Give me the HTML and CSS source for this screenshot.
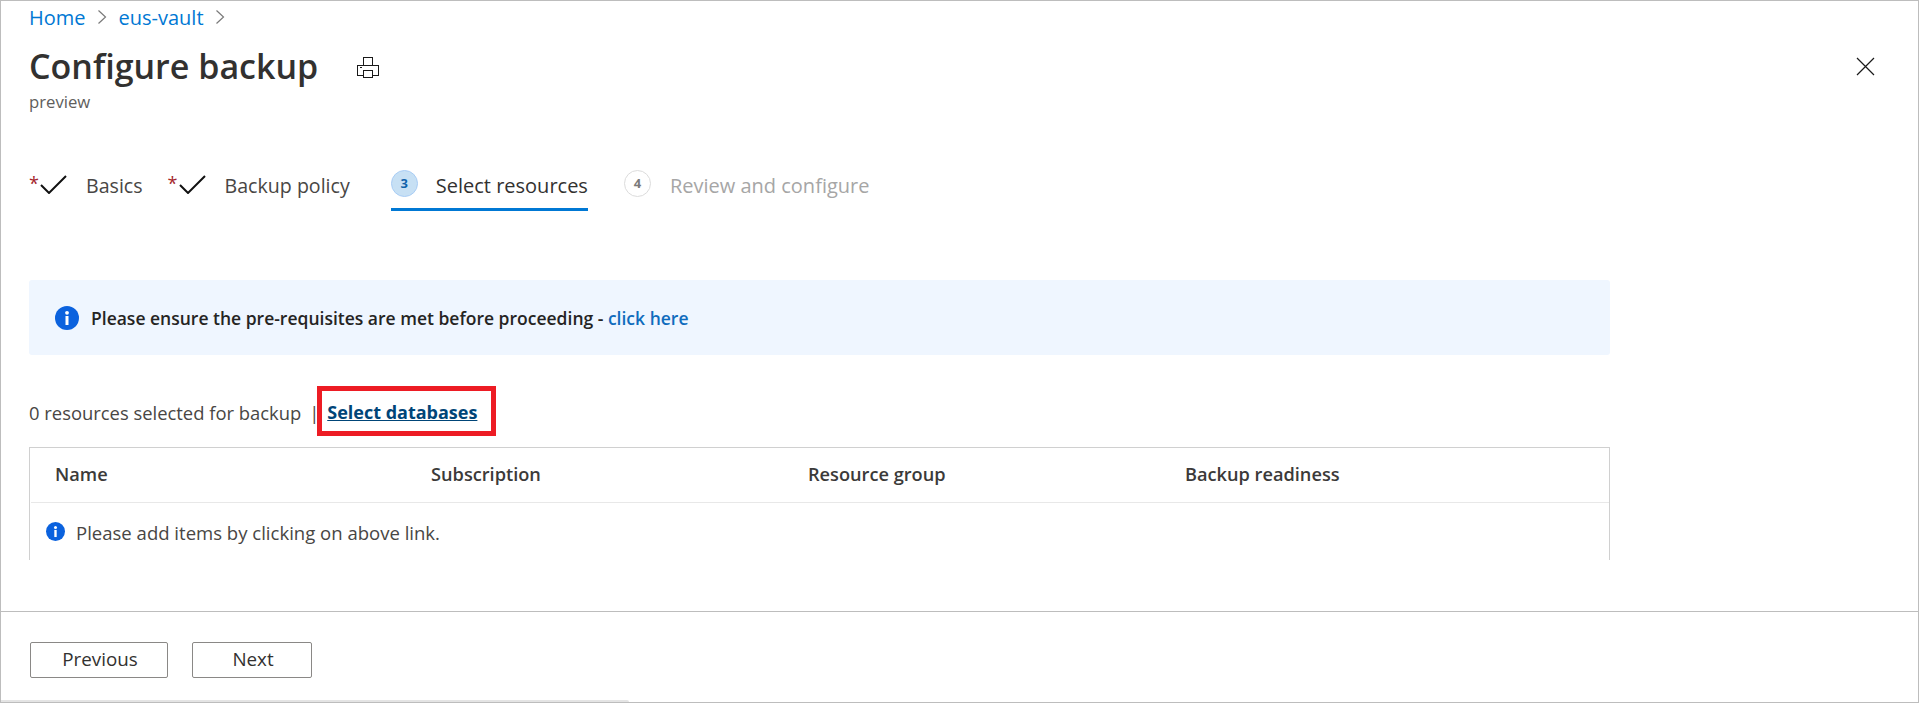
FILE: index.html
```html
<!DOCTYPE html>
<html lang="en">
<head>
<meta charset="utf-8">
<title>Configure backup</title>
<link rel="stylesheet" href="styles.css">
</head>
<body>
<div class="frame">
  <main class="content">
    <nav class="crumbs">
      <a class="crumb" href="#">Home</a>
      <svg class="chev" viewBox="0 0 10 16"><path d="M1.5 1.5 8.5 8 1.500 14.5"/></svg>
      <a class="crumb" href="#">eus-vault</a>
      <svg class="chev" viewBox="0 0 10 16"><path d="M1.5 1.5 8.5 8 1.500 14.5"/></svg>
    </nav>
    <header class="head">
      <div class="head-main">
        <div class="title-row">
          <h1 class="title">Configure backup</h1>
          <svg class="print" viewBox="0 0 22 21"><path d="M6.500 8V.5H15.500V8M6.500 18.500H.5V8H21.500V18.500H15.500M6.500 13.500H15.500V20.500H6.500ZM3 10.500H5"/></svg>
        </div>
        <div class="sub">preview</div>
      </div>
      <svg class="close" viewBox="0 0 19 19"><path d="M1 1 18 18M18 1 1 18"/></svg>
    </header>
    <div class="tabs">
      <div class="tab"><span class="req">*</span><svg class="check" viewBox="0 0 27 19"><path d="M1 10 9 18 26 1"/></svg><span class="tab-label">Basics</span></div>
      <div class="tab"><span class="req">*</span><svg class="check" viewBox="0 0 27 19"><path d="M1 10 9 18 26 1"/></svg><span class="tab-label">Backup policy</span></div>
      <div class="tab tab-active"><span class="num num-active">3</span><span class="tab-label">Select resources</span></div>
      <div class="tab tab-off"><span class="num">4</span><span class="tab-label">Review and configure</span></div>
    </div>
    <div class="banner">
      <svg class="info info-lg" viewBox="0 0 24 24"><circle cx="12" cy="12" r="12"/><rect class="i" x="10.500" y="10" width="3" height="9"/><circle class="i" cx="12" cy="6.800" r="1.900"/></svg>
      <span class="banner-text">Please ensure the pre-requisites are met before proceeding - <a class="banner-link" href="#">click here</a></span>
    </div>
    <div class="select-row">
      <span class="sel-text">0 resources selected for backup</span>
      <span class="sel-text sep">|</span>
      <span class="callout"><a class="select-link" href="#">Select databases</a></span>
    </div>
    <div class="grid">
      <div class="grid-head">
        <span>Name</span><span>Subscription</span><span>Resource group</span><span>Backup readiness</span>
      </div>
      <div class="grid-empty">
        <svg class="info info-sm" viewBox="0 0 24 24"><circle cx="12" cy="12" r="12"/><rect class="i" x="10.500" y="10" width="3" height="9"/><circle class="i" cx="12" cy="6.800" r="1.900"/></svg>
        <span>Please add items by clicking on above link.</span>
      </div>
    </div>
  </main>
  <footer class="foot">
    <button class="btn btn-prev">Previous</button>
    <button class="btn btn-next">Next</button>
    <div class="scrollbar"></div>
  </footer>
</div>
</body>
</html>
```
FILE: styles.css
```css
* { box-sizing: border-box; }
html, body { margin: 0; height: 100%; }
body { font-family: "Open Sans", "Noto Sans", sans-serif; color: #323130; background: #fff; overflow: hidden; }
.frame { height: 703px; border: 1px solid #bdbdbd; display: flex; flex-direction: column; }
.content { flex: 1; padding: 0 28px; min-height: 0; }
.crumbs { display: flex; align-items: center; height: 32px; font-size: 20px; }
.crumb { color: #0078d4; text-decoration: none; }
.chev { width: 10px; height: 16px; margin: 0 11.500px; fill: none; stroke: #7a7a7a; stroke-width: 1.200; }
.head { display: flex; justify-content: space-between; align-items: flex-start; padding-top: 14px; height: 114px; }
.title-row { display: flex; align-items: center; height: 38px; }
.title { margin: 0; font-size: 34px; font-weight: 600; line-height: 38px; color: #323130; width: 328px; white-space: nowrap; }
.print { width: 22px; height: 21px; margin-top: 3px; fill: none; stroke: #1a1a1a; stroke-width: 1; shape-rendering: crispEdges; }
.sub { font-size: 16.700px; line-height: 20px; color: #605e5c; margin-top: 7px; }
.close { width: 19px; height: 19px; margin: 10px 15px 0 0; fill: none; stroke: #1a1a1a; stroke-width: 1.200; }
.tabs { display: flex; height: 64px; padding-top: 23px; }
.tab { display: flex; align-items: flex-start; height: 38px; font-size: 19.600px; line-height: 28px; color: #484644; margin-right: 25px; white-space: nowrap; }
.req { color: #a4262c; font-size: 18px; width: 11px; line-height: 20px; margin-top: 3px; }
.check { width: 27px; height: 19px; margin-top: 5px; fill: none; stroke: #111; stroke-width: 2; }
.tab-label { margin-left: 19px; margin-top: 2px; }
.tab-active { border-bottom: 3px solid #0078d4; color: #323130; font-size: 20px; height: 41px; margin-left: 16px; margin-right: 36px; }
.tab-active .tab-label { margin-left: 18px; }
.tab-off { color: #a6a6a6; font-size: 20px; }
.num { width: 27px; height: 27px; border-radius: 50%; border: 1px solid #dcdcdc; font-size: 13px; font-weight: 700; display: flex; align-items: center; justify-content: center; color: #7a7a7a; line-height: 1; }
.num-active { background: #c7e0f4; border-color: #a9cdf5; color: #0f62ab; }
.banner { display: flex; align-items: center; height: 75px; margin-top: 69px; width: 1581px; background: #eff6ff; border-radius: 3px; padding-left: 26px; font-size: 17.500px; font-weight: 600; color: #252423; }
.info circle:first-child { fill: #0b62de; }
.info .i { fill: #fff; }
.info-lg { width: 24px; height: 24px; margin-right: 12px; }
.banner-link { color: #0f6cbd; text-decoration: none; }
.select-row { display: flex; align-items: center; height: 50px; margin-top: 31px; font-size: 18.400px; color: #484644; }
.sel-text { margin-top: 2px; }
.sep { margin-left: 8px; width: 8px; }
.callout { display: inline-flex; align-items: center; width: 179px; height: 50px; border: 5px solid #ed1c24; padding: 2px 0 0 5px; white-space: nowrap; }
.select-link { font-weight: 700; color: #004578; text-decoration: underline; font-size: 18px; }
.grid { width: 1581px; height: 113px; margin-top: 11px; border: 1px solid #d0d0d0; border-bottom: 0; }
.grid-head { display: grid; grid-template-columns: 376px repeat(3, 377px); align-items: center; height: 55px; padding: 0 0 2px 24px; font-size: 18.200px; font-weight: 600; color: #3b3a39; border-bottom: 1px solid #e8e8e8; margin-left: 1px; }
.grid-empty { display: flex; align-items: center; height: 58px; padding-left: 16px; font-size: 18.550px; color: #484644; }
.info-sm { width: 19px; height: 19px; margin-right: 11px; margin-top: -1px; }
.foot { position: relative; height: 91px; border-top: 1px solid #bdbdbd; padding: 30px 29px 0; display: flex; align-items: flex-start; }
.btn { height: 36px; border: 1px solid #8a8886; border-radius: 2px; background: #fff; color: #323130; font: 400 18.800px "Open Sans", "Noto Sans", sans-serif; padding: 0 0 2px 2px; }
.btn-prev { width: 138px; }
.btn-next { width: 120px; margin-left: 24px; }
.scrollbar { position: absolute; left: 0; bottom: 0; width: 628px; height: 2px; background: #e4e4e4; border-radius: 0 2px 0 0; }
```
